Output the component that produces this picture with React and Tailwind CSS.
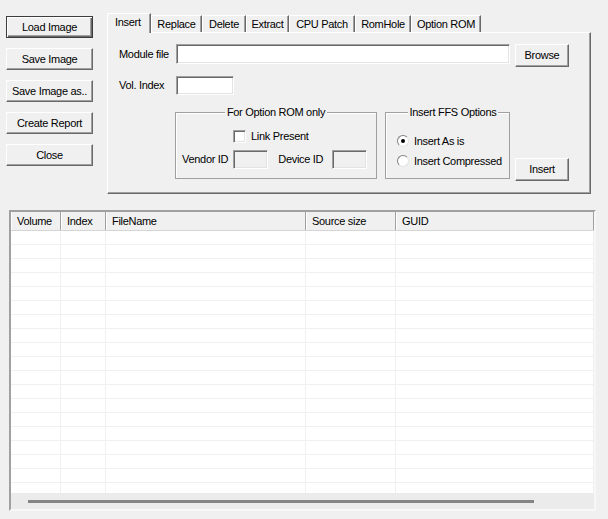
import React, { useState } from "react";

// classic raised button edges
const raised =
  "flex items-center justify-center bg-[#f0f0f0] border border-t-white border-l-white border-r-[#696969] border-b-[#696969] shadow-[inset_-1px_-1px_0_#a0a0a0]";
const defaultBtn =
  "flex items-center justify-center bg-[#f0f0f0] border border-[#3c3c3c] shadow-[inset_1px_1px_0_#fff,inset_-1px_-1px_0_#696969,inset_-2px_-2px_0_#a0a0a0]";
// sunken edit field
const sunken =
  "border border-t-[#a0a0a0] border-l-[#a0a0a0] border-r-white border-b-white shadow-[inset_1px_1px_0_#696969,inset_-1px_-1px_0_#e3e3e3]";

const tabs = [
  { name: "Insert", w: "w-[44px]" },
  { name: "Replace", w: "w-[51px]" },
  { name: "Delete", w: "w-[44px]" },
  { name: "Extract", w: "w-[43px]" },
  { name: "CPU Patch", w: "w-[66px]" },
  { name: "RomHole", w: "w-[56px]" },
  { name: "Option ROM", w: "w-[70px]" },
];

const columns = [
  { name: "Volume", w: "w-[50px]" },
  { name: "Index", w: "w-[45px]" },
  { name: "FileName", w: "w-[200px]" },
  { name: "Source size", w: "w-[90px]" },
  { name: "GUID", w: "flex-1" },
];

const rows = Array.from({ length: 19 }, (_, i) => i);

function Radio({ checked, onClick, label }) {
  return (
    <div className="flex items-center h-[16px] cursor-default" onClick={onClick}>
      <div className="w-[12px] h-[12px] rounded-full bg-white border border-t-[#808080] border-l-[#808080] border-r-[#e3e3e3] border-b-[#e3e3e3] flex items-center justify-center">
        {checked && <div className="w-[4px] h-[4px] rounded-full bg-black" />}
      </div>
      <span className="ml-[5px]">{label}</span>
    </div>
  );
}

export default function App() {
  const [active, setActive] = useState("Insert");
  const [compressed, setCompressed] = useState(false);
  const [linkPresent, setLinkPresent] = useState(false);

  return (
    <div className="w-[608px] h-[519px] overflow-hidden bg-[#f0f0f0] text-black text-[11px] tracking-[-0.3px] leading-[13px] font-['Liberation_Sans',Arial,sans-serif]">
      <div className="flex pt-[13px]">
        {/* left command buttons */}
        <div className="flex flex-col gap-[10px] pl-[6px] pt-[3px] w-[107px] shrink-0">
          <button className={`${defaultBtn} w-[87px] h-[22px]`}>Load Image</button>
          <button className={`${raised} w-[87px] h-[22px]`}>Save Image</button>
          <button className={`${raised} w-[87px] h-[22px]`}>Save Image as..</button>
          <button className={`${raised} w-[87px] h-[22px]`}>Create Report</button>
          <button className={`${raised} w-[87px] h-[22px]`}>Close</button>
        </div>

        {/* tab control */}
        <div className="w-[484px] shrink-0">
          <div className="flex items-end h-[19px]">
            {tabs.map((t) => {
              const sel = t.name === active;
              return (
                <div
                  key={t.name}
                  onClick={() => setActive(t.name)}
                  className={`${t.w} ${
                    sel ? "h-[20px] mb-[-1px] relative z-10 pl-[7px]" : "h-[17px] justify-center"
                  } flex items-center bg-[#f0f0f0] border-t border-l border-r border-t-white border-l-white border-r-[#696969] shadow-[inset_-1px_0_0_#a0a0a0] cursor-default`}
                >
                  <span className={sel ? "-mt-[3px]" : ""}>{t.name}</span>
                </div>
              );
            })}
          </div>
          <div className="h-[162px] border border-t-white border-l-white border-r-[#696969] border-b-[#696969] shadow-[inset_-1px_-1px_0_#a0a0a0] pl-[11px] pt-[11px]">
            <div className="flex items-start">
              <div className="w-[57px] h-[20px] flex items-center">Module file</div>
              <div className={`${sunken} w-[334px] h-[20px] bg-white`} />
              <button className={`${raised} ml-[5px] w-[54px] h-[23px]`}>Browse</button>
            </div>
            <div className="flex items-start mt-[9px]">
              <div className="w-[57px] h-[19px] flex items-center">Vol. Index</div>
              <div className={`${sunken} w-[58px] h-[19px] bg-white`} />
            </div>
            <div className="flex items-start mt-[11px] ml-[56px]">
              <fieldset className="w-[202px] h-[73px] border border-[#a0a0a0] shadow-[inset_1px_1px_0_#fff] px-0 pt-[11px]">
                <legend className="mx-auto px-[2px] bg-[#f0f0f0]">For Option ROM only</legend>
                <div
                  className="flex items-center pl-[57px] cursor-default"
                  onClick={() => setLinkPresent(!linkPresent)}
                >
                  <div className={`${sunken} w-[13px] h-[13px] bg-white flex items-center justify-center text-[10px]`}>
                    {linkPresent ? "✓" : ""}
                  </div>
                  <span className="ml-[5px]">Link Present</span>
                </div>
                <div className="flex items-center pl-[6px] mt-[7px]">
                  <span>Vendor ID</span>
                  <div className={`${sunken} ml-[5px] w-[35px] h-[19px]`} />
                  <span className="ml-[10px]">Device ID</span>
                  <div className={`${sunken} ml-[9px] w-[35px] h-[19px]`} />
                </div>
              </fieldset>
              <fieldset className="ml-[8px] w-[125px] h-[73px] border border-[#a0a0a0] shadow-[inset_1px_1px_0_#fff] pl-[11px] pt-[14px]">
                <legend className="mx-auto px-[2px] bg-[#f0f0f0]">Insert FFS Options</legend>
                <Radio checked={!compressed} onClick={() => setCompressed(false)} label="Insert As is" />
                <div className="mt-[4px]">
                  <Radio checked={compressed} onClick={() => setCompressed(true)} label="Insert Compressed" />
                </div>
              </fieldset>
              <button className={`${raised} ml-[5px] mt-[52px] w-[54px] h-[23px]`}>Insert</button>
            </div>
          </div>
        </div>
      </div>

      {/* file list */}
      <div className="mt-[16px] ml-[9px] w-[587px] h-[301px] flex flex-col border-2 border-t-[#a0a0a0] border-l-[#a0a0a0] border-r-[#f7f7f7] border-b-[#f7f7f7] shadow-[inset_1px_1px_0_#696969]">
        <div className="flex h-[19px] shrink-0 bg-[#f0f0f0] border-b border-[#d5d5d5]">
          {columns.map((c) => (
            <div
              key={c.name}
              className={`${c.w} h-full flex items-center pl-[6px] border-r border-r-[#a0a0a0] shadow-[inset_1px_0_0_#fff]`}
            >
              {c.name}
            </div>
          ))}
        </div>
        <div className="flex-1 overflow-hidden bg-white">
          {rows.map((r) => (
            <div key={r} className="flex h-[14px] border-b border-[#f0f0f0]">
              {columns.map((c) => (
                <div key={c.name} className={`${c.w} h-full border-r border-[#f0f0f0]`} />
              ))}
            </div>
          ))}
        </div>
        <div className="h-[16px] shrink-0 bg-[#ebebeb] flex items-center pl-[17px]">
          <div className="w-[506px] h-[3px] bg-[#858585]" />
        </div>
      </div>
    </div>
  );
}
